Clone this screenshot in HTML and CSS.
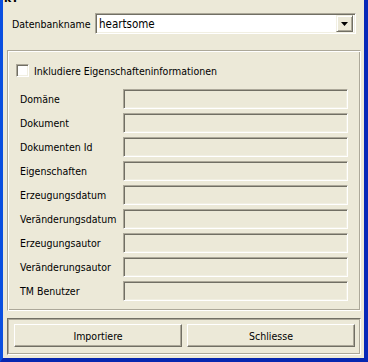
FILE: index.html
```html
<!DOCTYPE html>
<html>
<head>
  <title>Import</title>
  <link rel="stylesheet" href="styles.css">
</head>
<body>
  <div class="window">
    <div class="caption"><span>kT</span></div>

    <div class="db-row">
      <label class="db-label">Datenbankname</label>
      <div class="combo">
        <span class="combo-text">heartsome</span>
        <span class="combo-btn">
          <svg width="7" height="4" viewBox="0 0 7 4"><path d="M0 0h7L3.5 4z" fill="#000"/></svg>
        </span>
      </div>
    </div>

    <div class="group props">
      <label class="check"><span class="box"></span>Inkludiere Eigenschafteninformationen</label>
      <div class="field-row"><span class="field-label">Domäne</span><div class="field"></div></div>
      <div class="field-row"><span class="field-label">Dokument</span><div class="field"></div></div>
      <div class="field-row"><span class="field-label">Dokumenten Id</span><div class="field"></div></div>
      <div class="field-row"><span class="field-label">Eigenschaften</span><div class="field"></div></div>
      <div class="field-row"><span class="field-label">Erzeugungsdatum</span><div class="field"></div></div>
      <div class="field-row"><span class="field-label">Veränderungsdatum</span><div class="field"></div></div>
      <div class="field-row"><span class="field-label">Erzeugungsautor</span><div class="field"></div></div>
      <div class="field-row"><span class="field-label">Veränderungsautor</span><div class="field"></div></div>
      <div class="field-row"><span class="field-label">TM Benutzer</span><div class="field"></div></div>
    </div>

    <div class="group buttons">
      <button class="btn">Importiere</button>
      <button class="btn">Schliesse</button>
    </div>
  </div>
</body>
</html>
```

FILE: styles.css
```css
html, body {
  margin: 0;
  padding: 0;
}

body {
  font-family: "DejaVu Sans Condensed", "DejaVu Sans", sans-serif;
  font-size: 10.5px;
  color: #000;
  background-color: #ece9d8;
}

.window {
  width: 361px;
  height: 358px;
  background-color: #ece9d8;
  border-left: 3px solid #0a4fe0;
  border-right: 4px solid #0728b8;
  border-bottom: 4px solid #0627b0;
}

.caption {
  height: 5px;
  overflow: hidden;
  padding-left: 1px;
}

.caption span {
  display: block;
  margin-top: -8px;
  font-size: 12px;
  font-weight: bold;
  line-height: 12px;
}

.db-row {
  display: flex;
  align-items: center;
  height: 21px;
  margin-top: 8px;
  padding-left: 9px;
}

.db-label {
  width: 83px;
}

.combo {
  display: flex;
  align-items: center;
  box-sizing: border-box;
  width: 261px;
  height: 21px;
  padding: 2px;
  background-color: #fff;
  border: 1px solid #aca899;
  border-right-color: #fff;
  border-bottom-color: #fff;
  box-shadow: inset 1px 1px 0 #716f64, inset -1px -1px 0 #f1efe2;
}

.combo-text {
  flex: 1;
  padding-left: 1px;
  font-size: 11.5px;
}

.combo-btn {
  display: flex;
  align-items: center;
  justify-content: center;
  box-sizing: border-box;
  width: 17px;
  height: 17px;
  background-color: #ece9d8;
  border: 1px solid #f1efe2;
  border-right-color: #716f64;
  border-bottom-color: #716f64;
  box-shadow: inset 1px 1px 0 #fff, inset -1px -1px 0 #aca899;
}

.group {
  box-sizing: border-box;
  width: 354px;
  margin-left: 4px;
  border: 1px solid #aca899;
  border-right-color: #fff;
  border-bottom-color: #fff;
  box-shadow: inset 1px 1px 0 #fff, inset -1px -1px 0 #aca899;
}

.props {
  height: 261px;
  margin-top: 16px;
  padding: 13px 0 0 8px;
}

.check {
  display: flex;
  align-items: center;
  height: 13px;
}

.box {
  box-sizing: border-box;
  width: 13px;
  height: 13px;
  margin-right: 5px;
  background-color: #fff;
  border: 1px solid #aca899;
  border-right-color: #fff;
  border-bottom-color: #fff;
  box-shadow: inset 1px 1px 0 #716f64, inset -1px -1px 0 #f1efe2;
}

.field-row {
  display: flex;
  align-items: center;
  height: 20px;
  margin-top: 4px;
  padding-left: 4px;
}

.field-row:first-of-type {
  margin-top: 12px;
}

.field-label {
  width: 103px;
  white-space: nowrap;
}

.field {
  box-sizing: border-box;
  width: 225px;
  height: 20px;
  background-color: #ece9d8;
  border: 1px solid #aca899;
  border-right-color: #fff;
  border-bottom-color: #fff;
  box-shadow: inset 1px 1px 0 #716f64, inset -1px -1px 0 #f1efe2;
}

.buttons {
  display: flex;
  gap: 5px;
  height: 37px;
  margin-top: 7px;
  padding: 5px 0 0 6px;
  border-color: #716f64 #fff #fff #716f64;
  box-shadow: inset 1px 1px 0 #aca899, inset -1px -1px 0 #aca899;
}

.btn {
  box-sizing: border-box;
  width: 168px;
  height: 23px;
  padding: 0;
  font-family: "DejaVu Sans Condensed", "DejaVu Sans", sans-serif;
  font-size: 10.5px;
  color: #000;
  background-color: #ece9d8;
  border: 1px solid #fff;
  border-right-color: #716f64;
  border-bottom-color: #716f64;
  box-shadow: inset -1px -1px 0 #aca899;
}
```
